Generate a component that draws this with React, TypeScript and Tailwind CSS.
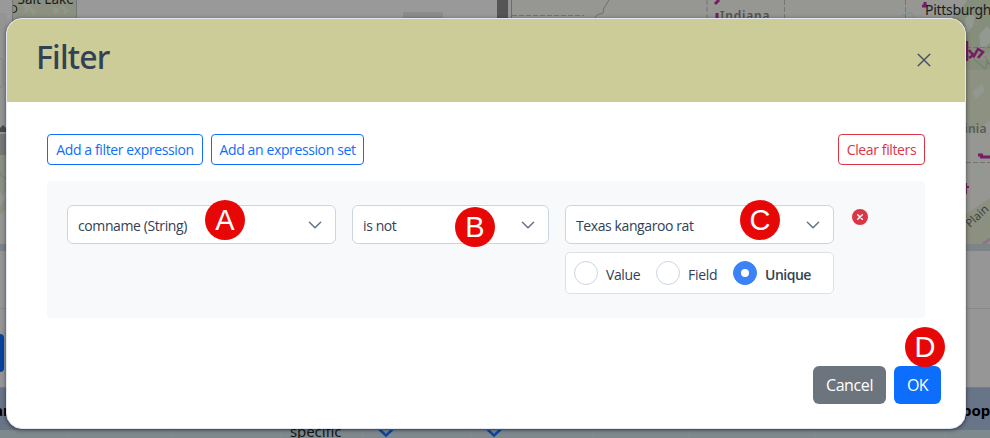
import { useState, type ReactNode } from "react";
import clsx from "clsx";

type ValueMode = "Value" | "Field" | "Unique";

const valueModes: { name: ValueMode; gap: string; spacing: string }[] = [
  { name: "Value", gap: "w-[82px]", spacing: "tracking-[-0.4px]" },
  { name: "Field", gap: "w-[77px]", spacing: "tracking-[-0.3px]" },
  { name: "Unique", gap: "w-[84px]", spacing: "tracking-[-0.5px]" },
];

function Marker({ label, place }: { label: string; place: string }) {
  return (
    <span
      className={clsx(
        "absolute z-10 flex h-10 w-10 items-center justify-center rounded-full bg-[#e80707] font-['Liberation_Sans',sans-serif] text-[29px] leading-none tracking-normal text-white",
        place
      )}
    >
      {label}
    </span>
  );
}

function Chevron() {
  return (
    <svg className="h-3.5 w-3.5" viewBox="0 0 14 14" fill="none" stroke="#64748b" strokeWidth="1.5" strokeLinecap="round" strokeLinejoin="round">
      <path d="M1.4 4.2 7 9.8l5.6-5.6" />
    </svg>
  );
}

function Select({ value, width, children }: { value: string; width: string; children?: ReactNode }) {
  return (
    <div className={clsx("relative flex h-[39px] items-center justify-between rounded-md border border-[#cbd5e1] bg-white pr-[13px] pl-2.5 text-[14px] text-[#334155]", width)}>
      <span className="pt-px tracking-[-0.4px]">{value}</span>
      <Chevron />
      {children}
    </div>
  );
}

function RightMap() {
  return (
    <svg className="block h-full w-full" viewBox="0 0 478 244" fill="none">
      <rect width="478" height="244" fill="#969693" />
      <path d="M440 18c4-8 12-9 15-18h23v70l-8 8-10 22-6-10z" fill="#858d7b" />
      <path d="M440 70h38v50l-14 12-24 2z" fill="#8c9182" />
      <path d="M453 18l6-4 4 3-2 9-7 8zM467 35l8-9 3 3v14l-9 7zM460 92l10-8 3 6-9 9zM463 172l4-5 5 1-3 8-6 2z" fill="#929991" />
      <path d="M454 60h24v-8l-8 3zM454 214l24-16v46h-24z" fill="#8b9081" />
      <path d="M0 15.5h72M195 0v18M272.500 0v18M393.500 0v18M454 47.500h24M454 162.500h24" stroke="#747474" strokeDasharray="5 2" />
      <path d="M97 0l-5 8-1 5-6 2-3 4" stroke="#687080" />
      <path d="M389 16l9-4 5 7" stroke="#77909a" />
      <path d="M461 58l12 11 3-7-3-6M474 62l4 2" stroke="#73767a" />
      <g stroke="#751d65" strokeWidth="3">
        <path d="M207 0l-4 4M205 13v5M413 2v5M410 6h5" />
        <path d="M455 41v20M457 50l5 6 4-7 5 3-5 6M457 58l6-4" strokeWidth="2.500" />
        <path d="M466 155h5M468 157h10" />
        <path d="M454 183v11M454 187h3" strokeWidth="2" />
      </g>
      <path d="M471 244l7-5" stroke="#91728d" strokeWidth="3" />
      <text x="208" y="20" fill="#515151" fontSize="12" fontFamily="Noto Sans" fontWeight="600" letterSpacing="0.8">Indiana</text>
      <text x="413" y="15" fill="#1b1c1d" fontSize="14" fontFamily="Noto Sans" letterSpacing="-0.3">Pittsburgh</text>
      <text x="439" y="133" fill="#595b59" fontSize="12" fontFamily="Noto Sans" fontWeight="600" letterSpacing="0.3">rginia</text>
      <text transform="translate(458 228) rotate(-43)" fill="#3d3f3c" fontSize="11.500" fontFamily="Noto Sans">Plain</text>
    </svg>
  );
}

function LeftMap() {
  return (
    <svg className="block h-full w-full" viewBox="0 0 497 244" fill="none">
      <rect width="497" height="244" fill="#999999" />
      <rect y="13" width="7" height="231" fill="#949494" />
      <rect x="12.500" y="-1" width="64" height="23" fill="#8b9081" stroke="#737779" />
      <path d="M22 4l3 5-2 5 7-4 4 6 2-5-6-4 3-4zM52 7l2 7 4-2 2-6 4 4v5l5-4-5-5-6 2z" fill="#939789" />
      <text x="17.500" y="4" fill="#1b1c1d" fontSize="13.500" fontFamily="Noto Sans">Salt Lake</text>
      <path d="M13 5.500c5 0 5 7 0 7" stroke="#292a29" strokeWidth="1.200" />
      <rect x="403" y="12" width="40" height="14" rx="2" fill="#8b8b8b" />
      <rect x="-8" y="58.500" width="11" height="29" rx="3" stroke="#858585" />
      <path d="M0 128l3-3 4 4v3H0z" fill="#4b4b4b" />
      <rect y="134" width="7" height="21" fill="#777777" />
      <rect y="155" width="7" height="89" fill="#969693" />
      <path d="M0 155h7v34l-4 7-3-4zM0 206l6-8v12l-6 4z" fill="#8b9081" />
      <path d="M0 172c2 5 4 6 7 7" stroke="#70808c" />
    </svg>
  );
}

function TableArrow() {
  return (
    <svg className="block h-2 w-4" viewBox="0 0 16 8" fill="none" stroke="#0b46a5" strokeWidth="2.500">
      <path d="M1-1 8 5.500l7-6.500" />
    </svg>
  );
}

function MapViewer() {
  return (
    <div className="flex h-full w-full flex-col bg-[#969696] font-['Noto_Sans',sans-serif]">
      <div className="flex h-[244px] shrink-0">
        <div className="w-[497px] shrink-0"><LeftMap /></div>
        <div className="w-[11px] shrink-0 bg-[#555555]" />
        <div className="w-1 shrink-0 border-r border-[#6d6d6d] bg-[#969696]" />
        <div className="flex-1"><RightMap /></div>
      </div>
      <div className="h-[7px] shrink-0 bg-[#7d8488]" />
      <div className="h-[58px] shrink-0 border-b border-[#898989]" />
      <div className="h-[79px] shrink-0 border-b border-[#7c7c7c] pt-[25px]">
        <div className="h-[38px] w-1 rounded-r-md bg-[#07429c]" />
      </div>
      <div className="flex h-[42px] shrink-0 items-center justify-between bg-[#687488] pt-0.5 text-[15px] font-bold text-black">
        <span className="-ml-1.5">an</span>
        <span className="w-[28px] whitespace-nowrap">pop</span>
      </div>
      <div className="flex h-2 shrink-0 bg-[#7e898e] text-[15px] text-[#161819]">
        <div className="w-[68px] border-r border-[#858b8e]" />
        <div className="w-[104px] border-r border-[#858b8e]" />
        <div className="w-[110px] border-r border-[#858b8e]" />
        <div className="w-[81px] border-r border-[#858b8e] pl-2 leading-[2px] tracking-[-0.1px]">specific</div>
        <div className="w-[108px] border-r border-[#858b8e] pl-[15px]">
          <TableArrow />
        </div>
        <div className="w-[123px] border-r border-[#858b8e] pl-[15px]">
          <TableArrow />
        </div>
        <div className="w-[96px] border-r border-[#858b8e]" />
        <div className="w-[125px] border-r border-[#858b8e]" />
        <div className="w-[131px] border-r border-[#858b8e]" />
      </div>
    </div>
  );
}

export default function App() {
  const [mode, setMode] = useState<ValueMode>("Unique");

  return (
    <div className="relative h-[438px] w-[990px] overflow-hidden font-['Open_Sans',sans-serif]">
      <MapViewer />

      <div className="absolute inset-0 pt-[18px] pl-1.5">
        <div role="dialog" className="flex h-[411px] w-[960px] flex-col overflow-hidden rounded-2xl border border-[#e2e8f0] bg-white shadow-[0_1px_4px_rgba(0,0,0,0.5)]">
          <header className="flex h-[83px] shrink-0 items-center justify-between bg-[#cccc99] pr-[34px] pl-[29px]">
            <h1 className="pb-2 font-['Noto_Sans',sans-serif] text-[32px] leading-none font-medium tracking-[-0.8px] text-[#334155]">Filter</h1>
            <button aria-label="Close" className="pb-0.5">
              <svg className="block h-3.5 w-3.5" viewBox="0 0 14 14" fill="none" stroke="#475569" strokeWidth="1.500" strokeLinecap="round">
                <path d="M1.200 1.200l11.600 11.600M12.800 1.200 1.200 12.800" />
              </svg>
            </button>
          </header>

          <div className="flex flex-col px-10 pt-8">
            <div className="flex h-[31px] gap-2 text-[14px] tracking-[-0.38px] whitespace-nowrap">
              <button className="w-[156px] rounded border border-[#0d6efd] text-[#0d6efd]">Add a filter expression</button>
              <button className="w-[153px] rounded border border-[#0d6efd] text-[#0d6efd]">Add an expression set</button>
              <button className="ml-auto w-[87px] rounded border border-[#dc3545] text-[#dc3545]">Clear filters</button>
            </div>

            <div className="mt-4 flex h-[137px] items-start gap-4 rounded bg-[#f8f9fb] px-5 pt-6">
              <Select value="comname (String)" width="w-[269px]">
                <Marker label="A" place="top-[-6px] left-[137px]" />
              </Select>
              <Select value="is not" width="w-[197px]">
                <Marker label="B" place="top-[1px] left-[102px]" />
              </Select>
              <div className="flex flex-col gap-2">
                <Select value="Texas kangaroo rat" width="w-[269px]">
                  <Marker label="C" place="top-[-6px] left-[174px]" />
                </Select>
                <div className="flex h-[42px] items-center rounded-[5px] border border-[#dee2e6] bg-white pl-2 text-[14px] text-[#334155]">
                  {valueModes.map((item) => (
                    <label key={item.name} className={clsx("flex items-center gap-2", item.gap, item.spacing, mode === item.name && "font-semibold")}>
                      <input type="radio" name="mode" className="sr-only" checked={mode === item.name} onChange={() => setMode(item.name)} />
                      <span className={clsx("flex h-6 w-6 shrink-0 items-center justify-center rounded-full border", mode === item.name ? "border-[#3b82f6] bg-[#3b82f6]" : "border-[#cbd5e1] bg-white")}>
                        {mode === item.name && <span className="h-2 w-2 rounded-full bg-white" />}
                      </span>
                      <span className="pt-0.5">{item.name}</span>
                    </label>
                  ))}
                </div>
              </div>
              <button className="mt-1 ml-0.5" aria-label="Remove expression">
                <svg className="h-4 w-4" viewBox="0 0 16 16">
                  <circle cx="8" cy="8" r="8" fill="#dc3545" />
                  <path d="M5.700 5.700l4.600 4.600M10.300 5.700l-4.600 4.600" stroke="white" strokeWidth="1.500" strokeLinecap="round" />
                </svg>
              </button>
            </div>
          </div>

          <footer className="mt-12 flex h-[38px] justify-end gap-2 pr-6 text-[16px] text-white">
            <button className="w-[73px] rounded-md bg-[#6c757d] tracking-[-0.4px]">Cancel</button>
            <button className="relative w-[47px] rounded-md bg-[#0d6efd] tracking-[-0.6px]">
              OK
              <Marker label="D" place="top-[-39px] left-[11px]" />
            </button>
          </footer>
        </div>
      </div>
    </div>
  );
}
